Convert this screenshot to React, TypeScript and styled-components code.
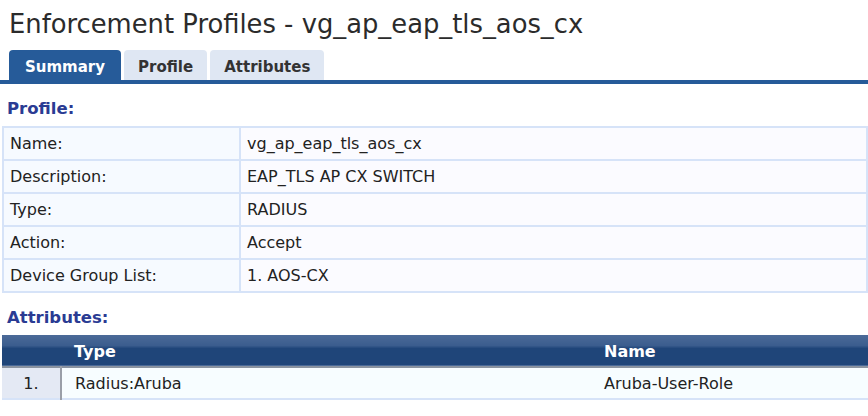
import { createGlobalStyle } from "styled-components";
import styled from "styled-components";

const GlobalStyle = createGlobalStyle`
	body {
		margin: 0;
		background: #ffffff;
		font-family: "DejaVu Sans", Verdana, sans-serif;
		color: #222222;
	}
`;

const Page = styled.div`
	width: 868px;
	height: 416px;
	overflow: hidden;
`;

const PageTitle = styled.h1`
	margin: 0;
	padding: 9px 0 0 9px;
	height: 42px;
	box-sizing: border-box;
	font-size: 25.8px;
	font-weight: normal;
	line-height: 30px;
	color: #2b2b2b;
`;

const TabBar = styled.div`
	display: flex;
	gap: 3px;
	padding: 8px 0 0 9px;
	border-bottom: 4px solid #265b99;
`;

const Tab = styled.div<{ $active?: boolean }>`
	height: 30px;
	box-sizing: border-box;
	padding: 3px ${({ $active }) => ($active ? "16px" : "14px")} 0;
	display: flex;
	align-items: center;
	justify-content: center;
	border-radius: 4px 4px 0 0;
	font-size: 15px;
	font-weight: bold;
	background: ${({ $active }) => ($active ? "#265b99" : "#dfe7f3")};
	color: ${({ $active }) => ($active ? "#ffffff" : "#333333")};
`;

const SectionHeading = styled.h2`
	margin: 0;
	padding: 15px 0 0 7px;
	height: 42px;
	box-sizing: border-box;
	font-size: 16.5px;
	font-weight: bold;
	color: #2a3b93;
`;

const DetailTable = styled.table`
	margin-left: 2px;
	width: 866px;
	border-collapse: collapse;
	font-size: 16px;
`;

const DetailRow = styled.tr`
	height: 33px;
`;

const LabelCell = styled.td`
	width: 229px;
	padding: 0 0 0 6px;
	border: 2px solid #d6e3f8;
	background: #f6faff;
`;

const ValueCell = styled.td`
	padding: 0 0 0 6px;
	border: 2px solid #d6e3f8;
	background: #fbfbff;
`;

const AttrTable = styled.table`
	margin-left: 2px;
	width: 866px;
	border-collapse: collapse;
	table-layout: fixed;
	font-size: 16px;
`;

const HeadRow = styled.tr`
	height: 32px;
	background: linear-gradient(#4b6a98 0%, #3b5d8e 35%, #1f4579 45%, #1f4579 100%);
	border-bottom: 2px solid #8a93a0;
`;

const HeadCell = styled.th<{ $w?: number }>`
	box-sizing: border-box;
	text-align: left;
	padding: 2px 0 0 13px;
	color: #ffffff;
	font-weight: bold;
	font-size: 16px;
	${({ $w }) => ($w ? `width: ${$w}px;` : "")}
`;

const BodyRow = styled.tr`
	height: 32px;
	border-bottom: 2px solid #d6e3f8;
`;

const IndexCell = styled.td`
	text-align: center;
	background: #e4e9f4;
	border-right: 2px solid #9a9fa8;
`;

const AttrCell = styled.td`
	background: #f7fdff;
	padding-left: 13px;
`;

const profile = [
	["Name:", "vg_ap_eap_tls_aos_cx"],
	["Description:", "EAP_TLS AP CX SWITCH"],
	["Type:", "RADIUS"],
	["Action:", "Accept"],
	["Device Group List:", "1. AOS-CX"],
];

export default function App() {
	return (
		<Page>
			<GlobalStyle />
			<PageTitle>Enforcement Profiles - vg_ap_eap_tls_aos_cx</PageTitle>
			<TabBar>
				<Tab $active>Summary</Tab>
				<Tab>Profile</Tab>
				<Tab>Attributes</Tab>
			</TabBar>
			<SectionHeading>Profile:</SectionHeading>
			<DetailTable>
				<tbody>
					{profile.map(([label, value]) => (
						<DetailRow key={label}>
							<LabelCell>{label}</LabelCell>
							<ValueCell>{value}</ValueCell>
						</DetailRow>
					))}
				</tbody>
			</DetailTable>
			<SectionHeading>Attributes:</SectionHeading>
			<AttrTable>
				<thead>
					<HeadRow>
						<HeadCell $w={59} />
						<HeadCell $w={530}>Type</HeadCell>
						<HeadCell>Name</HeadCell>
					</HeadRow>
				</thead>
				<tbody>
					<BodyRow>
						<IndexCell>1.</IndexCell>
						<AttrCell>Radius:Aruba</AttrCell>
						<AttrCell>Aruba-User-Role</AttrCell>
					</BodyRow>
				</tbody>
			</AttrTable>
		</Page>
	);
}
